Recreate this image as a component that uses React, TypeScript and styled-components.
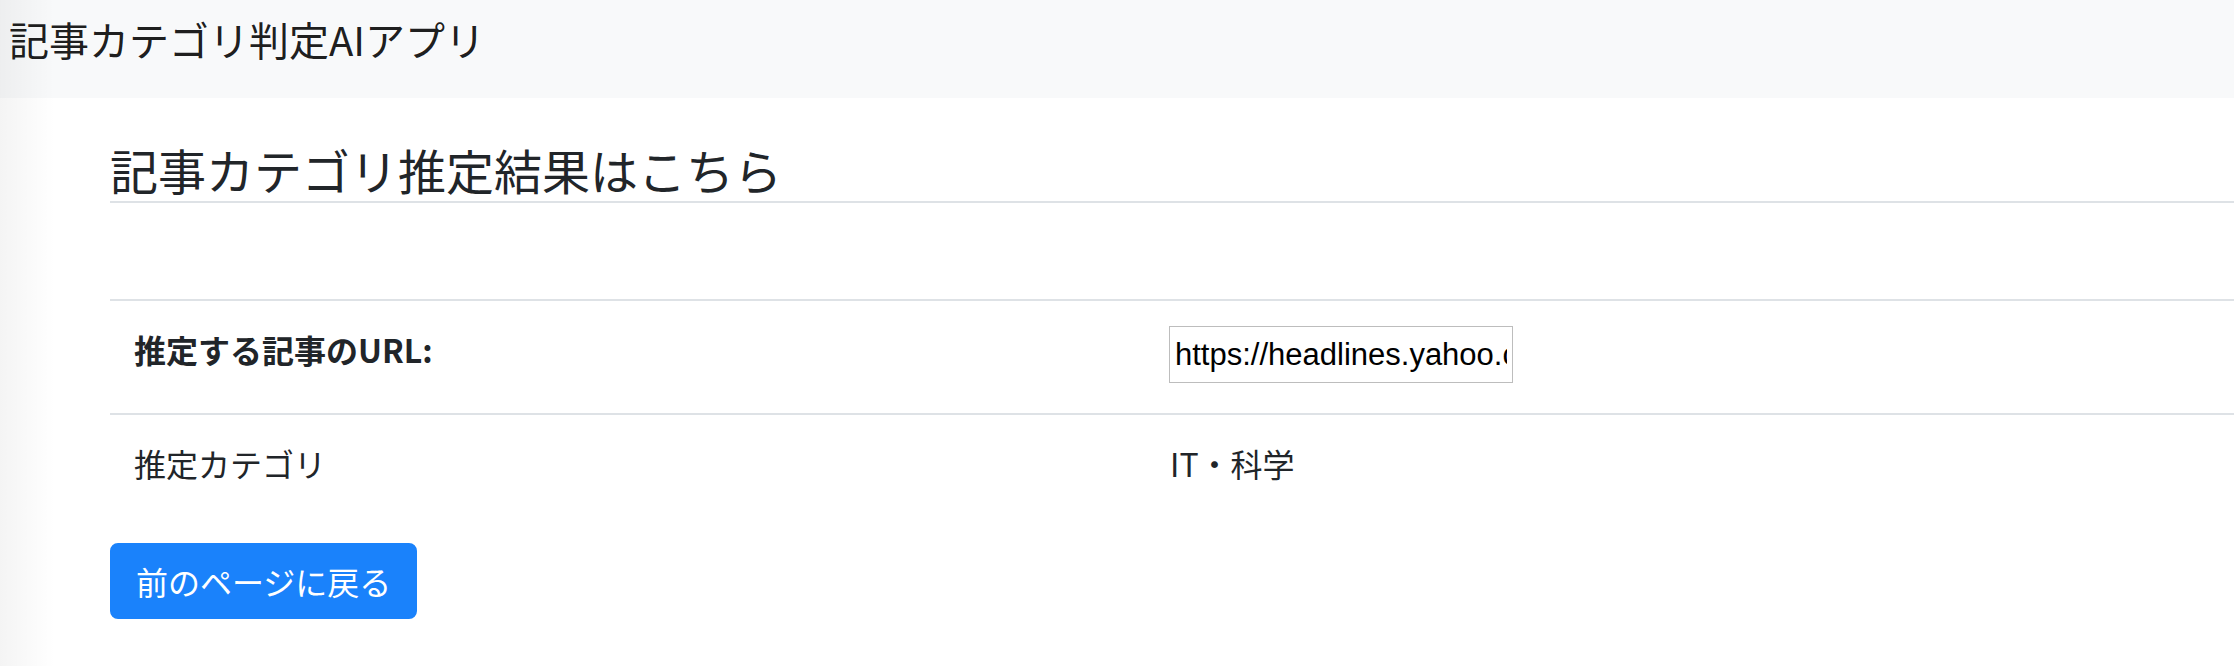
import React from "react";
import styled, { createGlobalStyle } from "styled-components";

const GlobalStyle = createGlobalStyle`
  * { box-sizing: border-box; }
  html, body { margin: 0; padding: 0; background: #fff; }
  body {
    font-family: "Noto Sans CJK JP", "Noto Sans", "Liberation Sans", sans-serif;
    color: #212529;
    font-size: 32px;
    line-height: 1.5;
    overflow: hidden;
  }
`;

const edgeShade = "linear-gradient(to right, rgba(0,0,0,0.045), rgba(0,0,0,0) 55px)";

const Navbar = styled.nav`
  height: 98px;
  background: ${edgeShade}, #f8f9fa;
  padding: 9px 0 0 9px;
`;

const Brand = styled.a`
  display: inline-block;
  font-size: 40px;
  line-height: 60px;
  color: rgba(0, 0, 0, 0.9);
  text-decoration: none;
`;

const Page = styled.main`
  min-height: 568px;
  background: ${edgeShade}, #fff;
  padding: 43px 0 0 110px;
`;

const Heading = styled.h4`
  margin: 0;
  font-size: 48px;
  font-weight: 400;
  line-height: 57px;
  padding-bottom: 3px;
  border-bottom: 2px solid #dee2e6;
`;

const Table = styled.div`
  margin-top: 96px;
  margin-bottom: 32px;
`;

const Row = styled.div`
  display: grid;
  grid-template-columns: 1036px 1fr;
  border-top: 2px solid #dee2e6;
`;

const Cell = styled.div<{ $bold?: boolean }>`
  padding: 24px;
  line-height: 48px;
  font-weight: ${(p) => (p.$bold ? 700 : 400)};
`;

const UrlInput = styled.input`
  display: block;
  width: 344px;
  height: 57px;
  margin: 1px 0 6px -1px;
  padding: 0 5px;
  border: 1px solid #bdbdbd;
  border-radius: 0;
  font-family: "Liberation Sans", Arial, sans-serif;
  font-size: 31px;
  color: #000;
  background: #fff;
  outline: none;
`;

const BackButton = styled.button`
  display: inline-block;
  font-family: "Noto Sans CJK JP", "Noto Sans", sans-serif;
  font-size: 32px;
  line-height: 48px;
  padding: 12px 24px;
  border: 2px solid #1a82fb;
  border-radius: 8px;
  background: #1a82fb;
  color: #fff;
  cursor: pointer;
`;

export default function App() {
  return (
    <>
      <GlobalStyle />
      <Navbar>
        <Brand href="#">記事カテゴリ判定AIアプリ</Brand>
      </Navbar>
      <Page>
        <Heading>記事カテゴリ推定結果はこちら</Heading>
        <Table>
          <Row>
            <Cell $bold>推定する記事のURL:</Cell>
            <Cell>
              <UrlInput
                type="text"
                readOnly
                defaultValue="https://headlines.yahoo.co.jp/hl?a=20200101-00000000-sci"
              />
            </Cell>
          </Row>
          <Row>
            <Cell>推定カテゴリ</Cell>
            <Cell>IT・科学</Cell>
          </Row>
        </Table>
        <BackButton type="button">前のページに戻る</BackButton>
      </Page>
    </>
  );
}
